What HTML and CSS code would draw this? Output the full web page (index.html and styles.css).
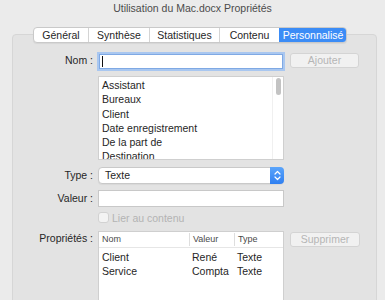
FILE: index.html
```html
<!DOCTYPE html>
<html lang="fr">

<head>
    <meta charset="UTF-8">
    <title>Utilisation du Mac.docx Propriétés</title>
    <link rel="stylesheet" href="styles.css">
</head>

<body>
    <div class="titlebar">Utilisation du Mac.docx Propriétés</div>

    <div class="tabs">
        <span class="tab t1">Général</span>
        <span class="tab t2">Synthèse</span>
        <span class="tab t3">Statistiques</span>
        <span class="tab t4">Contenu</span>
        <span class="tab t5 active">Personnalisé</span>
    </div>

    <div class="panel">
        <div class="form">
            <!-- Nom -->
            <label class="lbl">Nom :</label>
            <div class="field focus"><span class="caret"></span></div>
            <button class="btn" disabled>Ajouter</button>

            <!-- liste des noms -->
            <span></span>
            <div class="list">
                <ul class="items">
                    <li>Assistant</li>
                    <li>Bureaux</li>
                    <li>Client</li>
                    <li>Date enregistrement</li>
                    <li>De la part de</li>
                    <li>Destination</li>
                </ul>
                <div class="track"><span class="thumb"></span></div>
            </div>
            <span></span>

            <!-- Type -->
            <label class="lbl tall">Type :</label>
            <div class="select">
                <span class="select_text">Texte</span>
                <span class="select_arrow">
                    <svg width="7" height="11" viewBox="0 0 7 11">
                        <path d="M1 4 L3.5 1.5 L6 4 M1 7 L3.5 9.5 L6 7" fill="none" stroke="#fff" stroke-width="1.2" stroke-linecap="round" stroke-linejoin="round"/>
                    </svg>
                </span>
            </div>
            <span></span>

            <!-- Valeur -->
            <label class="lbl tall">Valeur :</label>
            <div class="field plain"></div>
            <span></span>

            <!-- Lier au contenu -->
            <span></span>
            <div class="check">
                <span class="box"></span>
                <span>Lier au contenu</span>
            </div>
            <span></span>

            <!-- Propriétés -->
            <label class="lbl">Propriétés :</label>
            <div class="table">
                <div class="row head">
                    <span>Nom</span>
                    <span class="sep">Valeur</span>
                    <span class="sep">Type</span>
                </div>
                <div class="body">
                    <div class="row">
                        <span>Client</span>
                        <span>René</span>
                        <span>Texte</span>
                    </div>
                    <div class="row">
                        <span>Service</span>
                        <span>Compta</span>
                        <span>Texte</span>
                    </div>
                </div>
            </div>
            <button class="btn low" disabled>Supprimer</button>
        </div>
    </div>
</body>

</html>
```

FILE: styles.css
```css
* {
    padding: 0;
    margin: 0;
    list-style: none;
    box-sizing: border-box;
}

body {
    width: 385px;
    height: 300px;
    overflow: hidden;
    background-color: #ebebeb;
    font-family: "Liberation Sans", Arial, sans-serif;
    font-size: 10.5px;
    color: #262626;
}

.titlebar {
    height: 22px;
    line-height: 17px;
    text-align: center;
    color: #4b4b4b;
}

/* onglets, posés sur le bord haut du panneau */
.tabs {
    display: flex;
    width: fit-content;
    height: 16px;
    margin: 5px 0 -9px 33px;
    border: 1px solid #c9c9c9;
    border-radius: 4px;
    background-color: #fff;
    position: relative;
    z-index: 1;
    box-shadow: 0 1px 1px rgba(0, 0, 0, 0.06);
}

.tab {
    line-height: 14px;
    text-align: center;
    border-left: 1px solid #d4d4d4;
}

.tab:first-child {
    border-left: none;
}

.t1 { width: 54px; }
.t2 { width: 61px; }
.t3 { width: 70px; }
.t4 { width: 60px; }
.t5 { width: 67px; }

.tab.active {
    background-color: #3b8cf6;
    color: #fff;
    border-radius: 0 3px 3px 0;
    border-left-color: #3b8cf6;
}

.panel {
    width: 365px;
    height: 280px;
    margin-left: 12px;
    padding-top: 18px;
    border: 1px solid #d6d6d6;
    border-radius: 4px;
    background-color: #e3e3e3;
}

.form {
    display: grid;
    grid-template-columns: 80px 186px 70px;
    grid-template-rows: 23px 91px 23px 22px 19px auto;
    column-gap: 5px;
    align-items: start;
}

.form > :nth-child(3n) {
    margin-left: 1px;
}

.lbl {
    text-align: right;
    line-height: 15px;
}

.lbl.tall {
    line-height: 17px;
}

.field {
    height: 17px;
    background-color: #fff;
    border: 1px solid #c8c8c8;
}

.field.focus {
    height: 15px;
    margin: 1px 1px 0;
    border-color: #7fa9e4;
    box-shadow: 0 0 0 2px #a9c7f0;
    padding-left: 2px;
    display: flex;
    align-items: center;
}

.caret {
    width: 1px;
    height: 11px;
    background-color: #111;
}

.btn {
    width: 69px;
    height: 15px;
    border: 1px solid #d4d4d4;
    border-radius: 3px;
    background-color: #f1f1f1;
    color: #b5b5b5;
    font: inherit;
    line-height: 13px;
}

.btn.low {
    margin-top: 1px;
    width: 70px;
}

.list {
    display: flex;
    height: 84px;
    border: 1px solid #cfcfcf;
    background-color: #fff;
    overflow: hidden;
}

.items {
    flex: 1;
    padding: 1px 0 0 3px;
    line-height: 14.3px;
}

.track {
    width: 11px;
    border-left: 1px solid #f0f0f0;
    padding: 1px 0 0 3px;
}

.thumb {
    display: block;
    width: 5px;
    height: 17px;
    border-radius: 3px;
    background-color: #c3c3c3;
}

.select {
    display: flex;
    height: 17px;
    border: 1px solid #c9c9c9;
    border-radius: 4px;
    background-color: #fff;
    box-shadow: 0 1px 1px rgba(0, 0, 0, 0.05);
}

.select_text {
    flex: 1;
    padding-left: 6px;
    line-height: 15px;
}

.select_arrow {
    width: 14px;
    margin: -1px -1px -1px 0;
    border-radius: 0 4px 4px 0;
    background: linear-gradient(#5ba5fb, #2f7ff1);
    display: flex;
    align-items: center;
    justify-content: center;
}

.check {
    display: flex;
    align-items: center;
    height: 11px;
    color: #b3b3b3;
}

.check .box {
    width: 11px;
    height: 11px;
    margin-right: 3px;
    border: 1px solid #d2d2d2;
    border-radius: 3px;
    background-color: #f3f3f3;
}

.table {
    height: 80px;
    border: 1px solid #cfcfcf;
    background-color: #fff;
}

.row {
    display: grid;
    grid-template-columns: 90px 45px 1fr;
    line-height: 14px;
}

.row span {
    padding-left: 3px;
}

.row.head {
    height: 16px;
    line-height: 15px;
    font-size: 9px;
    color: #4a4a4a;
    border-bottom: 1px solid #e6e6e6;
}

.row.head .sep {
    border-left: 1px solid #dedede;
    margin: 1px 0 2px;
    line-height: 13px;
}

.body {
    padding-top: 2px;
}
```
